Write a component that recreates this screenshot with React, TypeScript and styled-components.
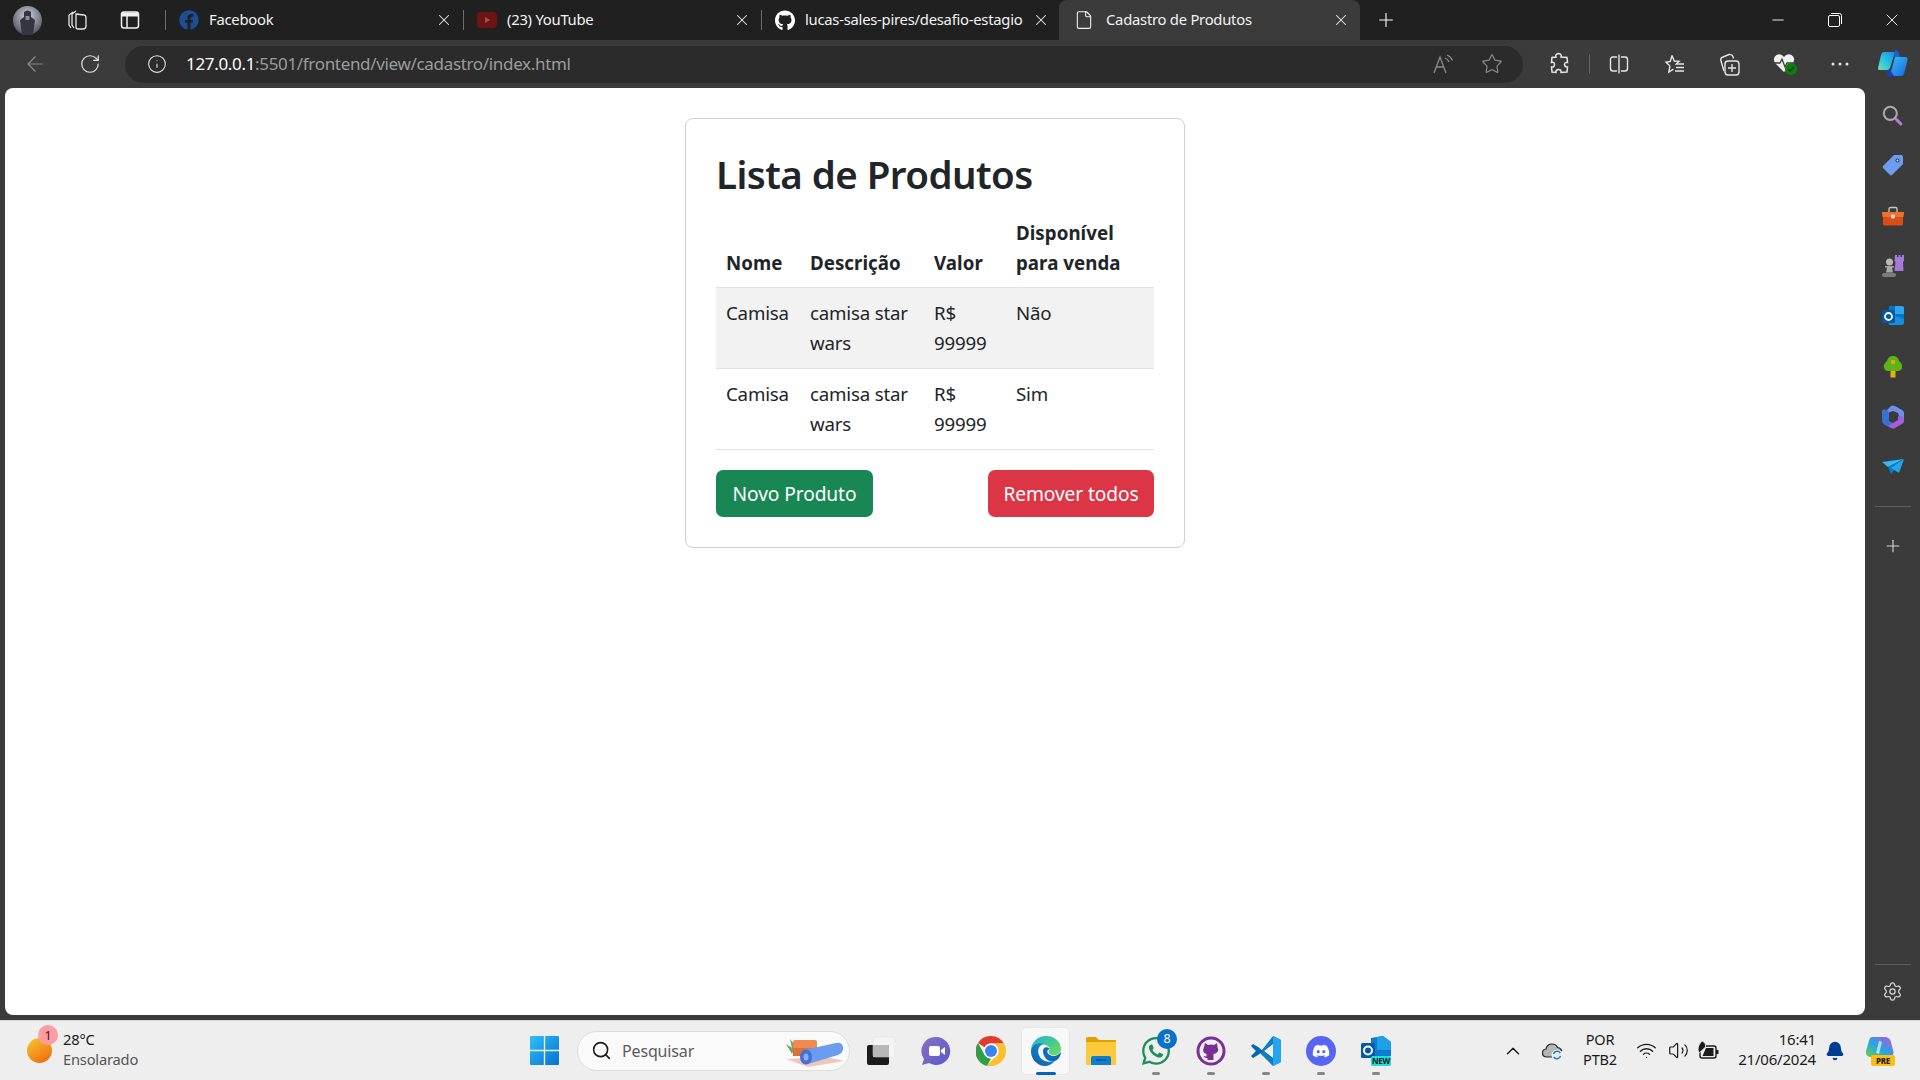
import React from 'react'

import styled, { createGlobalStyle } from 'styled-components'
import {
  ArrowLeft,
  Bell,
  ChevronUp,
  File,
  Info,
  Minus,
  Plus,
  RotateCw,
  Search,
  Settings,
  Star,
  Volume2,
  Wifi,
  X,
} from 'lucide-react'
import { FaDiscord, FaFacebook, FaGithub, FaWhatsapp } from 'react-icons/fa'

/**********************************************************************/

const GlobalStyle = createGlobalStyle`
  html, body {
    margin: 0;
    height: 100%;
    overflow: hidden;
    background: #3b3b3b;
    font-family: "Noto Sans", "Open Sans", sans-serif;
  }

  * {
    box-sizing: border-box;
  }
`

const Screen = styled.div`
  display: flex;
  flex-direction: column;
  width: 1920px;
  height: 1080px;
`

/* title bar ***********************************************************/

const TabStrip = styled.div`
  display: flex;
  align-items: stretch;
  height: 40px;
  background: #202020;
  color: #fff;
`

const StripButton = styled.div<{ $w: number; $gap?: number }>`
  display: flex;
  align-items: center;
  justify-content: center;
  width: ${(p) => p.$w}px;
  margin-right: ${(p) => p.$gap ?? 0}px;
`

const Tab = styled.div<{ $active?: boolean }>`
  display: flex;
  align-items: center;
  gap: ${(p) => (p.$active ? 12 : 10)}px;
  width: ${(p) => (p.$active ? 301 : 298)}px;
  padding: 0 10px 0 14px;
  font-size: 14.8px;
  letter-spacing: -0.25px;
  white-space: nowrap;
  position: relative;
  color: #f2f2f2;
  background: ${(p) => (p.$active ? '#3b3b3b' : 'transparent')};
  border-radius: ${(p) => (p.$active ? '8px 8px 0 0' : '0')};
  padding-left: ${(p) => (p.$active ? 15 : 14)}px;

  &::before {
    content: '';
    display: ${(p) => (p.$active ? 'none' : 'block')};
    position: absolute;
    left: 0;
    top: 10px;
    bottom: 10px;
    width: 1px;
    background: #6b6b6b;
  }
`

const TabTitle = styled.span`
  margin-bottom: 2px;
`

const TabIcon = styled.span`
  display: flex;
  align-items: center;
  justify-content: center;
  width: 20px;
  height: 20px;
  flex: none;
`

const TabClose = styled.span`
  display: flex;
  margin-left: auto;
  margin-right: 0;
  color: #e8e8e8;
`

const WindowButtons = styled.div`
  display: flex;
  margin-left: auto;
`

const WindowButton = styled.div`
  display: flex;
  align-items: center;
  justify-content: center;
  width: 57px;
  color: #fff;
`

/* toolbar *************************************************************/

const Toolbar = styled.div`
  display: flex;
  align-items: center;
  height: 48px;
  padding-left: 7px;
  background: #3b3b3b;
  color: #e6e6e6;
`

const ToolButton = styled.div<{ $w?: number; $dim?: boolean; $lead?: number }>`
  display: flex;
  align-items: center;
  justify-content: center;
  flex: none;
  width: ${(p) => p.$w ?? 55}px;
  height: 48px;
  padding-left: ${(p) => p.$lead ?? 0}px;
  color: ${(p) => (p.$dim ? '#8c8c8c' : '#e6e6e6')};
`

const AddressBar = styled.div`
  display: flex;
  align-items: center;
  width: 1398px;
  height: 37px;
  margin-left: 8px;
  padding: 0 7px 0 22px;
  background: #2b2b2b;
  border-radius: 19px;
`

const Url = styled.div`
  margin: 0 0 2px 19px;
  font-size: 17px;
  letter-spacing: -0.33px;
  color: #9c9c9c;
  white-space: nowrap;

  b {
    font-weight: 400;
    color: #fff;
  }
`

const AddressActions = styled.div`
  display: flex;
  margin-left: auto;
`

const ToolDivider = styled.div`
  width: 1px;
  height: 20px;
  margin: 0 1px 0 2px;
  background: #666;
`

/* page ****************************************************************/

const Body = styled.div`
  display: flex;
  height: 932px;
  background: #3b3b3b;
`

const Page = styled.main`
  width: 1860px;
  height: 927px;
  margin-left: 5px;
  padding-top: 30px;
  background: #fff;
  border-radius: 8px;
`

const Card = styled.section`
  width: 500px;
  height: 430px;
  margin: 0 auto;
  padding: 30px;
  background: #fff;
  border: 1px solid #d0d0d0;
  border-radius: 8px;
  color: #212529;
`

const Title = styled.h1`
  margin: 0 0 9px;
  padding-top: 1px;
  font-size: 38.5px;
  font-weight: 600;
  line-height: 48px;
  letter-spacing: -0.55px;
`

const Table = styled.table`
  width: 438px;
  border-collapse: collapse;
  table-layout: fixed;
  font-size: 18.7px;
  line-height: 30px;
  letter-spacing: -0.2px;
`

const HeadCell = styled.th<{ $w: number }>`
  width: ${(p) => p.$w}px;
  padding: 11px 10px 9px;
  text-align: left;
  vertical-align: bottom;
  font-weight: 700;
  letter-spacing: 0.05px;
  border-bottom: 1px solid #dee2e6;
`

const Row = styled.tr<{ $striped?: boolean }>`
  background: ${(p) => (p.$striped ? '#f2f2f2' : '#fff')};
`

const Cell = styled.td`
  padding: 10px;
  vertical-align: top;
  border-bottom: 1px solid #dee2e6;
`

const Actions = styled.div`
  display: flex;
  justify-content: space-between;
  margin-top: 20px;
`

const Button = styled.button<{ $tone: string; $w: number }>`
  width: ${(p) => p.$w}px;
  height: 47px;
  padding: 0;
  border: none;
  border-radius: 7px;
  background: ${(p) => p.$tone};
  color: #fff;
  font-family: inherit;
  font-size: 19.2px;
  letter-spacing: -0.1px;
`

/* side bar ************************************************************/

const SideBar = styled.aside`
  display: flex;
  flex-direction: column;
  align-items: center;
  width: 55px;
  padding: 2px 0 3px;
  color: #d8d8d8;
`

const SideItem = styled.div`
  display: flex;
  align-items: center;
  justify-content: center;
  width: 100%;
  height: 50.3px;
  flex: none;
`

const SideRule = styled.div<{ $auto?: boolean }>`
  width: 36px;
  height: 1px;
  margin-top: ${(p) => (p.$auto ? 'auto' : '14px')};
  margin-bottom: ${(p) => (p.$auto ? '2px' : '13px')};
  background: #5e5e5e;
`

/* task bar ************************************************************/

const TaskBar = styled.footer`
  display: flex;
  align-items: center;
  height: 60px;
  background: #eeeeee;
  border-top: 1px solid #d6d6d6;
  color: #1b1b1b;
  font-size: 14.7px;
  letter-spacing: -0.2px;
`

const Weather = styled.div`
  display: flex;
  align-items: center;
  gap: 11px;
  width: 516px;
  padding-left: 27px;
  position: relative;
`

const WeatherText = styled.div`
  margin-bottom: 3px;
  font-size: 14.7px;
  line-height: 20px;

  small {
    display: block;
    font-size: 14.7px;
    color: #555;
  }
`

const Badge = styled.span<{ $bg: string; $fg: string; $top: number; $left: number }>`
  position: absolute;
  top: ${(p) => p.$top}px;
  left: ${(p) => p.$left}px;
  display: flex;
  align-items: center;
  justify-content: center;
  width: 20px;
  height: 20px;
  border-radius: 50%;
  background: ${(p) => p.$bg};
  color: ${(p) => p.$fg};
  font-size: 12.5px;
  letter-spacing: 0;
`

const StartButton = styled.div`
  display: flex;
  align-items: center;
  justify-content: center;
  width: 56px;
`

const SearchBox = styled.div`
  display: flex;
  align-items: center;
  width: 273px;
  height: 40px;
  margin-left: 5px;
  padding: 0 5px 0 13px;
  background: #fafafa;
  border: 1px solid #dcdcdc;
  border-radius: 20px;
  color: #5a5a5a;
  font-size: 16px;
  letter-spacing: -0.15px;

  span {
    margin-left: 10px;
  }

  svg:last-child {
    margin-left: auto;
  }
`

const Apps = styled.div`
  display: flex;
  margin-left: 3px;
`

const AppSlot = styled.div<{ $active?: boolean }>`
  display: flex;
  align-items: center;
  justify-content: center;
  width: 55px;
  height: 48px;
  position: relative;

  ${(p) =>
    p.$active &&
    `
    &::before {
      content: '';
      position: absolute;
      inset: 0 3px;
      background: #f8f8f8;
      border: 1px solid #e8e8e8;
      border-radius: 5px;
    }
  `}

  & > svg {
    position: relative;
  }
`

const RunDot = styled.i<{ $active?: boolean }>`
  position: absolute;
  left: 50%;
  bottom: 0;
  width: ${(p) => (p.$active ? 20 : 8)}px;
  height: 3px;
  transform: translateX(-50%);
  border-radius: 2px;
  background: ${(p) => (p.$active ? '#0067c0' : '#858585')};
`

const Tray = styled.div`
  display: flex;
  align-items: center;
  margin-left: auto;
  padding-right: 14px;
`

const TrayItem = styled.div<{ $w: number }>`
  display: flex;
  align-items: center;
  justify-content: center;
  width: ${(p) => p.$w}px;
`

const TwoLines = styled.div<{ $w: number; $right?: boolean }>`
  width: ${(p) => p.$w}px;
  margin-bottom: 3px;
  text-align: ${(p) => (p.$right ? 'right' : 'center')};
  font-size: ${(p) => (p.$right ? 15 : 14.5)}px;
  line-height: 20px;
  letter-spacing: -0.2px;
`

/* drawings ************************************************************/

const Avatar = () => (
  <svg width="29" height="29" viewBox="0 0 29 29">
    <defs>
      <radialGradient id="av" cx="50%" cy="35%" r="70%">
        <stop offset="0" stopColor="#d0d3da" />
        <stop offset="1" stopColor="#474a54" />
      </radialGradient>
    </defs>
    <circle cx="14.500" cy="14.500" r="14.500" fill="url(#av)" />
    <path d="M11 6 q3.500-3 7 0 l0 5 4 3 -2 15 -11 0 -2-15 4-3z" fill="#33363e" />
    <path d="M12.500 10 h4 v4 h-4z" fill="#8a8d95" />
  </svg>
)

const Collections = () => (
  <svg width="22" height="22" viewBox="0 0 22 22" fill="none" stroke="#e6e6e6" strokeWidth="1.3">
    <path d="M3 6 l4-3 M3 6 v10 l2 3 M6 5 l4-3 M6 5 v11 l2 3" />
    <path d="M10 5 l8 1 q2 .4 2 2 v9 q0 3-3 3 h-5 q-2 0-2-2 z" />
  </svg>
)

const TabsIcon = () => (
  <svg width="20" height="20" viewBox="0 0 20 20" fill="none" stroke="#f0f0f0" strokeWidth="1.5">
    <rect x="1.500" y="2" width="17" height="16" rx="2.500" />
    <path d="M7 6 v12" />
    <path d="M2 2.500 h16 v4 h-16z" fill="#f0f0f0" stroke="none" />
  </svg>
)

const YouTubeIcon = () => (
  <svg width="20" height="16" viewBox="0 0 20 16">
    <rect width="20" height="16" rx="4" fill="#6e1414" />
    <path d="M8 5 l5 3 -5 3z" fill="#a85050" />
  </svg>
)

const ReadAloud = () => (
  <svg width="22" height="22" viewBox="0 0 22 22" fill="none" stroke="#8c8c8c" strokeWidth="1.3">
    <path d="M2 20 l6-16 6 16 M4.500 14 h7" />
    <path d="M13 5 q3 1 4 4 M15 2 q4 1.500 5.500 5.500" />
  </svg>
)

const Puzzle = () => (
  <svg width="22" height="24" viewBox="0 0 22 24" fill="none" stroke="#e6e6e6" strokeWidth="1.5">
    <path d="M8 5 q-1-3 2.500-3.500 q3.500 .5 2.500 3.500 l6 .5 .5 5 q-3-.5-3 2 t3 2.500 l-.5 5 -6 .5 q.5-3-2.500-3 t-2.500 3 l-4-.5 -.5-5 q3 .5 3-2.500 t-3-2 l.5-5z" />
  </svg>
)

const SplitIcon = () => (
  <svg width="20" height="22" viewBox="0 0 20 22" fill="none" stroke="#e6e6e6" strokeWidth="1.4">
    <path d="M8 4 h-4 q-2.500 0-2.500 2.500 v9 q0 2.500 2.500 2.500 h4 M12 4 h4 q2.500 0 2.500 2.500 v9 q0 2.500-2.500 2.500 h-4 M10 1.500 v19" />
  </svg>
)

const FavList = () => (
  <svg width="22" height="22" viewBox="0 0 22 22" fill="none" stroke="#e6e6e6" strokeWidth="1.4">
    <path d="M9 2.500 l2.300 5.500 4.700.4 -3.600 3.300 M7 13 l-1.200 6 4.700-2.800 M7 13 l-4-3.800 4.300-.8 1.700-5.900" />
    <path d="M14 11 h7 M13 14.500 h8 M12 18 h9" />
  </svg>
)

const CollAdd = () => (
  <svg width="22" height="24" viewBox="0 0 22 24" fill="none" stroke="#e6e6e6" strokeWidth="1.4">
    <path d="M6 19 l-3-10 q-1-3 2-4 l6-2.500 q3-.5 4 2 l.5 2" />
    <rect x="7" y="9" width="14" height="14" rx="3" />
    <path d="M14 12 v8 M10 16 h8" />
  </svg>
)

const Health = () => (
  <svg width="26" height="24" viewBox="0 0 26 24">
    <path d="M11 20 L2 11 Q-1 6 3.500 3 Q8 1 11 5 Q14 1 18.500 3 Q23 6 20 11z" fill="#f0f0f0" />
    <path d="M1 11 h6 l2-4 3 8 2-4 h6" fill="none" stroke="#3b3b3b" strokeWidth="1.3" />
    <circle cx="18" cy="17" r="6" fill="#107c10" />
    <path d="M15 17 l2 2 4-4" fill="none" stroke="#0f3f0f" strokeWidth="1.3" />
  </svg>
)

const Dots = () => (
  <svg width="18" height="4" viewBox="0 0 18 4" fill="#e6e6e6">
    <circle cx="2" cy="2" r="1.500" />
    <circle cx="9" cy="2" r="1.500" />
    <circle cx="16" cy="2" r="1.500" />
  </svg>
)

const CopilotLogo = () => (
  <svg width="30" height="28" viewBox="0 0 30 28">
    <defs>
      <linearGradient id="cpa" x1="0" y1="1" x2="1" y2="0">
        <stop offset="0" stopColor="#6fe4a0" />
        <stop offset=".5" stopColor="#27c0e8" />
        <stop offset="1" stopColor="#1b8ce0" />
      </linearGradient>
      <linearGradient id="cpb" x1="0" y1="0" x2="1" y2="1">
        <stop offset="0" stopColor="#37bdf8" />
        <stop offset="1" stopColor="#1668e0" />
      </linearGradient>
    </defs>
    <path d="M6 2 h11 l-5 16 q-1 2-3 2 H2 q-2.500 0-2-2 L3 5 q.8-3 3-3z" fill="url(#cpa)" />
    <path d="M17 0 q3 0 4 3 l1 4 h-6z" fill="#1e5fd0" />
    <path d="M17 7 h10 q3 0 2.500 3 L26 24 q-1 2-3 2 H12 l5-19z" fill="url(#cpb)" />
    <path d="M8 20 h4 l4 6 q-5 2-6 0z" fill="#1a3fb0" />
  </svg>
)

const MagnifierColor = () => (
  <svg width="21" height="21" viewBox="0 0 24 24" fill="none">
    <circle cx="9.500" cy="9.500" r="7.500" stroke="#a8a8a8" strokeWidth="2.400" />
    <path d="M15 15 l1.500 1.500" stroke="#a8a8a8" strokeWidth="2.400" />
    <path d="M17 17 l4.500 4.500" stroke="#b57ad8" strokeWidth="3.500" strokeLinecap="round" />
  </svg>
)

const TagIcon = () => (
  <svg width="22" height="22" viewBox="0 0 22 22">
    <path d="M12 1 h7 q2 0 2 2 v7 L10 21 q-1 .8-2 0 L1 14 q-.8-1 0-2z" fill="#6c9df0" />
    <circle cx="15.500" cy="6.500" r="2" fill="#26364f" />
    <circle cx="15.500" cy="6.500" r=".9" fill="#fff" />
  </svg>
)

const ToolBox = () => (
  <svg width="22" height="20" viewBox="0 0 22 20">
    <path d="M7 6 v-3 q0-1.500 1.500-1.500 h5 q1.500 0 1.500 1.500 v3" fill="none" stroke="#c8c8c8" strokeWidth="1.300" />
    <path d="M0 6 h22 l-.5 5 h-21z" fill="#f07030" />
    <path d="M1 11 h20 v7 q0 1.500-1.500 1.500 h-17 q-1.500 0-1.500-1.500z" fill="#d94f14" />
    <rect x="9" y="8.500" width="4" height="4" rx="1" fill="#d8d8d8" />
  </svg>
)

const ChessIcon = () => (
  <svg width="22" height="24" viewBox="0 0 22 24">
    <path d="M13 1 h2 v2 h1.500 v-2 h2 v2 h1.500 v-2 h2 v6 l-1 1 .5 9 h-9 l1-9 -1-1z" fill="#a57ad6" />
    <circle cx="7.500" cy="8" r="3.500" fill="#b8b8b8" />
    <path d="M3 12 h9 v1.500 h-2 l1 5 h-7 l1-5 h-2z" fill="#a8a8a8" />
    <rect x="0" y="19" width="14" height="4" rx="2" fill="#7c7c7c" />
  </svg>
)

const OutlookIcon = () => (
  <svg width="22" height="22" viewBox="0 0 22 22">
    <path d="M7 1 h12 q3 0 3 2 v14 q0 3-3 3 H7z" fill="#0a70c8" />
    <path d="M13 1 h6 q3 0 3 2 v6 h-9z" fill="#28a8ea" />
    <path d="M7 9 l15 5 v3 q0 3-3 3 H7z" fill="#1490df" />
    <rect x="0" y="5" width="13" height="13" rx="1.500" fill="#0358a7" />
    <circle cx="6.500" cy="11.500" r="3.500" fill="none" stroke="#fff" strokeWidth="1.800" />
  </svg>
)

const TreeIcon = () => (
  <svg width="20" height="22" viewBox="0 0 20 22">
    <path d="M10 0 q5 0 6 5 q4 3 3 7 q-1 3-4 3 H5 q-3 0-4-3 q-1-4 3-7 q1-5 6-5z" fill="#5cb517" />
    <rect x="7.500" y="15" width="5" height="6.500" fill="#e8b010" />
    <circle cx="10" cy="6" r="2.200" fill="#f0a020" />
  </svg>
)

const M365Icon = () => (
  <svg width="22" height="24" viewBox="0 0 22 24">
    <path d="M9 1 q2-1 4 0 l7 4 q2 1 2 3 v6 l-5-3 -1-3 -5-2 -5 2 -2-2z" fill="#6f8fe8" />
    <path d="M2 4 l4 2 1 2 v8 l4 2 -2 5 -6-3 q-3-2-3-4 V7 q0-2 2-3z" fill="#3a6fd8" />
    <path d="M22 12 v4 q0 2-2 3 l-7 4 q-2 1-4 0 l-3-2 5-3 5-3 -1-4z" fill="#a060d8" />
    <path d="M8 8 l4-1 4 2 v5 l-5 3 -3-1z" fill="#3b3b3b" />
  </svg>
)

const PlaneIcon = () => (
  <svg width="22" height="16" viewBox="0 0 22 16">
    <path d="M0 3 L22 0 L6 8z" fill="#35b8f5" />
    <path d="M22 0 L6 8 L9 15z" fill="#0b78c8" />
    <path d="M22 0 L9 9 L17 14z" fill="#22a6ea" />
  </svg>
)

const WeatherBall = () => (
  <svg width="25" height="25" viewBox="0 0 25 25">
    <defs>
      <linearGradient id="sun" x1="0.2" y1="0" x2="0.8" y2="1">
        <stop offset="0" stopColor="#f3c22f" />
        <stop offset="1" stopColor="#f06a0c" />
      </linearGradient>
    </defs>
    <circle cx="12.500" cy="12.500" r="12.500" fill="url(#sun)" />
  </svg>
)

const WindowsLogo = () => (
  <svg width="29" height="29" viewBox="0 0 29 29">
    <defs>
      <linearGradient id="win" x1="0" y1="0" x2="1" y2="1">
        <stop offset="0" stopColor="#30c0f8" />
        <stop offset="1" stopColor="#0670d0" />
      </linearGradient>
    </defs>
    <path d="M1 0 h12.800 v13.800 H0 V1 q0-1 1-1z M15.200 0 H28 q1 0 1 1 v12.800 H15.200z M0 15.200 h13.800 V29 H1 q-1 0-1-1z M15.200 15.200 H29 V28 q0 1-1 1 H15.200z" fill="url(#win)" />
  </svg>
)

const SearchArt = () => (
  <svg width="60" height="32" viewBox="0 0 60 32">
    <path d="M2 24 L42 22 L60 26 L24 32z" fill="#f3c4b8" />
    <path d="M6 4 l5 6 -2 8z M2 9 l8 5 -2 5z" fill="#6aa86a" />
    <rect x="9" y="5" width="24" height="15" rx="2" fill="#f08a50" />
    <rect x="9" y="13" width="24" height="8" fill="#d87038" />
    <path d="M20 15 L52 8 q6-1 7 4 t-5 8 L24 29z" fill="#6a9cf0" />
    <ellipse cx="22" cy="22" rx="6" ry="7.500" fill="#3f6fd8" />
    <ellipse cx="22" cy="22" rx="2.500" ry="3.500" fill="#8ab0f5" />
  </svg>
)

const TaskView = () => (
  <svg width="30" height="30" viewBox="0 0 30 30">
    <rect x="1" y="9" width="22" height="20" rx="2" fill="#1c1c1c" />
    <rect x="7" y="1" width="22" height="20" rx="2" fill="#f4f4f4" fillOpacity=".85" stroke="#e2e2e2" strokeWidth=".5" />
    <rect x="7" y="9" width="16" height="12" fill="#b8b8b8" />
  </svg>
)

const MeetIcon = () => (
  <svg width="30" height="30" viewBox="0 0 30 30">
    <defs>
      <linearGradient id="meet" x1="0" y1="0" x2="1" y2="1">
        <stop offset="0" stopColor="#8a70c8" />
        <stop offset="1" stopColor="#5a5ac8" />
      </linearGradient>
    </defs>
    <path d="M15 1 a14 14 0 1 1 -7 26 L1 29 l2-6 A14 14 0 0 1 15 1z" fill="url(#meet)" />
    <rect x="8" y="10" width="11" height="10" rx="2" fill="#fff" />
    <path d="M20 14 l4-3 v8 l-4-3z" fill="#fff" />
  </svg>
)

const ChromeIcon = () => (
  <svg width="30" height="30" viewBox="0 0 30 30">
    <path d="M15 0 a15 15 0 0 1 13 7.500 H15 a7.500 7.500 0 0 0 -6.500 3.800 L2 7 A15 15 0 0 1 15 0z" fill="#e33b2e" />
    <path d="M2 7 L8.500 18.800 a7.500 7.500 0 0 0 6.500 3.700 L11 30 A15 15 0 0 1 2 7z" fill="#2f9e44" />
    <path d="M28 7.500 A15 15 0 0 1 11 29.500 L21.500 18.800 A7.500 7.500 0 0 0 15 7.500z" fill="#fbc02d" />
    <circle cx="15" cy="15" r="7.500" fill="#fff" />
    <circle cx="15" cy="15" r="6" fill="#3b82f0" />
  </svg>
)

const EdgeIcon = () => (
  <svg width="30" height="30" viewBox="0 0 30 30">
    <defs>
      <linearGradient id="edgeA" x1="0" y1="1" x2="1" y2="0">
        <stop offset="0" stopColor="#0c59a4" />
        <stop offset="1" stopColor="#1b9de2" />
      </linearGradient>
      <linearGradient id="edgeB" x1="0" y1="0" x2="1" y2="1">
        <stop offset="0" stopColor="#1bb0d8" />
        <stop offset="1" stopColor="#72e04f" />
      </linearGradient>
    </defs>
    <path d="M15 0 C24 0 30 6 30 13 C30 18 25 20 21 19 C17 18 17 15 19 13 C17 8 10 7 5 11 C2 13 1 15 0 15 C0 6 7 0 15 0z" fill="url(#edgeB)" />
    <path d="M0 15 C1 8 8 6 13 8 C8 9 6 14 8 19 C10 25 17 27 24 25 C20 29 17 30 14 30 C6 30 0 23 0 15z" fill="url(#edgeA)" />
    <path d="M12 15 C12 11 16 10 19 13 C16 13 15 17 19 19 C22 21 27 20 30 16 C30 20 27 24 24 25 C17 27 12 21 12 15z" fill="#0f6cbd" />
  </svg>
)

const FolderIcon = () => (
  <svg width="30" height="28" viewBox="0 0 30 28">
    <path d="M0 2 q0-2 2-2 h8 l3 3 h17 v5 H0z" fill="#e0a000" />
    <path d="M0 5 h30 v23 H0z" fill="#fcc83c" />
    <path d="M5 28 v-7 q0-2 2-2 h16 q2 0 2 2 v7z" fill="#0e7fd0" />
    <path d="M10 23 h10" stroke="#094f86" strokeWidth="1.500" />
  </svg>
)

const GithubDesktop = () => (
  <svg width="30" height="30" viewBox="0 0 30 30">
    <circle cx="15" cy="15" r="13" fill="#f2eef6" stroke="#7a2f94" strokeWidth="3" />
    <path d="M9 7 l3 2 q3-1 6 0 l3-2 .5 4 q1.500 3 0 5 q-2 2-4 2 v6 h-6 v-2 q-3 .5-4-2 l3 .5 v-2.500 q-2-.5-3-2 q-1-2 .5-5z" fill="#7a2f94" />
  </svg>
)

const VsCode = () => (
  <svg width="30" height="30" viewBox="0 0 30 30">
    <path d="M22 0 L30 4 V26 L22 30 L8 16 L11 14z" fill="#0e7fc4" />
    <path d="M22 0 L30 4 V26 L22 30z" fill="#23a6ee" />
    <path d="M22 7 L7 19 L2 22 L0 20 L5 15 L0 10 L2 8 L7 11 L22 23 V7z" fill="#0067b8" />
    <path d="M22 8 V22 L13 15z" fill="#eee" />
  </svg>
)

const DiscordBall = () => (
  <svg width="30" height="30" viewBox="0 0 30 30">
    <circle cx="15" cy="15" r="15" fill="#5865f2" />
    <foreignObject x="6" y="6" width="18" height="18">
      <FaDiscord size={18} color="#fff" />
    </foreignObject>
  </svg>
)

const OutlookNew = () => (
  <svg width="30" height="30" viewBox="0 0 30 30">
    <path d="M10 2 L22 0 L30 6 V20 H10z" fill="#0f7bd0" />
    <path d="M16 1 L22 0 L30 6 V14 H16z" fill="#1ca0e8" />
    <rect x="0" y="7" width="14" height="15" rx="1.500" fill="#0358a7" />
    <circle cx="7" cy="14.500" r="4" fill="none" stroke="#fff" strokeWidth="2" />
    <rect x="10" y="20" width="20" height="10" rx="1.500" fill="#1be0d8" />
    <text x="20" y="28" textAnchor="middle" fontSize="8" fontWeight="700" fill="#111" fontFamily="Noto Sans">NEW</text>
  </svg>
)

const SyncCloud = () => (
  <svg width="22" height="20" viewBox="0 0 22 20">
    <path d="M5 16 q-4.500 0-4.500-4 q0-3.500 3.500-4 q1-5 6-5 q4 0 5.500 3.500 q3 .3 4 3 l-5 6.500z" fill="#b5b5b5" stroke="#222" strokeWidth="1.200" />
    <circle cx="15" cy="14" r="5.500" fill="#eeeeee" />
    <path d="M11.500 13 a3.800 3.800 0 0 1 6.800-1 M18.500 15 a3.800 3.800 0 0 1 -6.800 1" fill="none" stroke="#1a7fd4" strokeWidth="1.500" />
  </svg>
)

const BatteryLeaf = () => (
  <svg width="22" height="20" viewBox="0 0 22 20">
    <rect x="3" y="5" width="16" height="12" rx="2" fill="none" stroke="#1b1b1b" strokeWidth="1.400" />
    <rect x="19" y="9" width="2.500" height="4" fill="#1b1b1b" />
    <path d="M9 7 h7.500 v8 h-11z" fill="#1b1b1b" />
    <path d="M5 0 q4 1.500 3.500 6 q-3 3-6.500 6 q-3-6 3-12z" fill="#1b1b1b" stroke="#eee" strokeWidth=".8" />
  </svg>
)

const CopilotPre = () => (
  <svg width="30" height="30" viewBox="0 0 30 30">
    <defs>
      <linearGradient id="pre" x1="0" y1="1" x2="1" y2="0">
        <stop offset="0" stopColor="#6fd048" />
        <stop offset=".45" stopColor="#1fa8e8" />
        <stop offset="1" stopColor="#c050d8" />
      </linearGradient>
    </defs>
    <path d="M7 1 h14 q4 1 5 5 l2 8 q2 6-4 7 H5 q-5-1-4-6 L4 5 q1-4 3-4z" fill="url(#pre)" />
    <path d="M14 5 l3 1 -3 12 -3-1z" fill="#fff" fillOpacity=".65" />
    <rect x="6" y="19" width="24" height="11" rx="2" fill="#fdbd12" />
    <text x="18" y="27.500" textAnchor="middle" fontSize="8" fontWeight="800" fill="#222" fontFamily="Noto Sans">PRE</text>
  </svg>
)

/**********************************************************************/

const rows = [
  { available: 'Não', striped: true },
  { available: 'Sim', striped: false },
]

const App: React.FC = () => {
  return (
    <Screen>
      <GlobalStyle />

      <TabStrip>
        <StripButton $w={55}>
          <Avatar />
        </StripButton>
        <StripButton $w={43}>
          <Collections />
        </StripButton>
        <StripButton $w={63} $gap={4}>
          <TabsIcon />
        </StripButton>
        <Tab>
          <TabIcon>
            <FaFacebook size={20} color="#1c4f96" />
          </TabIcon>
          <TabTitle>Facebook</TabTitle>
          <TabClose>
            <X size={18} strokeWidth={1.4} />
          </TabClose>
        </Tab>
        <Tab>
          <TabIcon>
            <YouTubeIcon />
          </TabIcon>
          <TabTitle>(23) YouTube</TabTitle>
          <TabClose>
            <X size={18} strokeWidth={1.4} />
          </TabClose>
        </Tab>
        <Tab>
          <TabIcon>
            <FaGithub size={21} color="#fff" />
          </TabIcon>
          <TabTitle>lucas-sales-pires/desafio-estagio</TabTitle>
          <TabClose>
            <X size={18} strokeWidth={1.4} />
          </TabClose>
        </Tab>
        <Tab $active>
          <TabIcon>
            <File size={20} strokeWidth={1.3} />
          </TabIcon>
          <TabTitle>Cadastro de Produtos</TabTitle>
          <TabClose>
            <X size={18} strokeWidth={1.4} />
          </TabClose>
        </Tab>
        <StripButton $w={52}>
          <Plus size={22} strokeWidth={1.2} />
        </StripButton>
        <WindowButtons>
          <WindowButton>
            <Minus size={18} strokeWidth={1.2} />
          </WindowButton>
          <WindowButton>
            <svg width="14" height="14" viewBox="0 0 14 14" fill="none" stroke="#fff">
              <rect x=".5" y="2.500" width="11" height="11" rx="1.500" />
              <path d="M3 .5 h8.500 q2 0 2 2 V11" />
            </svg>
          </WindowButton>
          <WindowButton>
            <X size={20} strokeWidth={1.1} />
          </WindowButton>
        </WindowButtons>
      </TabStrip>

      <Toolbar>
        <ToolButton $dim>
          <ArrowLeft size={24} strokeWidth={1.2} />
        </ToolButton>
        <ToolButton>
          <RotateCw size={22} strokeWidth={1.3} />
        </ToolButton>
        <AddressBar>
          <Info size={20} strokeWidth={1.3} color="#e6e6e6" />
          <Url>
            <b>127.0.0.1</b>:5501/frontend/view/cadastro/index.html
          </Url>
          <AddressActions>
            <ToolButton $w={50}>
              <ReadAloud />
            </ToolButton>
            <ToolButton $w={48} $dim>
              <Star size={22} strokeWidth={1.3} />
            </ToolButton>
          </AddressActions>
        </AddressBar>
        <ToolButton $w={64} $lead={8}>
          <Puzzle />
        </ToolButton>
        <ToolDivider />
        <ToolButton>
          <SplitIcon />
        </ToolButton>
        <ToolButton>
          <FavList />
        </ToolButton>
        <ToolButton>
          <CollAdd />
        </ToolButton>
        <ToolButton $lead={4}>
          <Health />
        </ToolButton>
        <ToolButton $w={57}>
          <Dots />
        </ToolButton>
        <ToolButton $w={50}>
          <CopilotLogo />
        </ToolButton>
      </Toolbar>

      <Body>
        <Page>
          <Card>
            <Title>Lista de Produtos</Title>
            <Table>
              <thead>
                <tr>
                  <HeadCell $w={84}>Nome</HeadCell>
                  <HeadCell $w={124}>Descrição</HeadCell>
                  <HeadCell $w={82}>Valor</HeadCell>
                  <HeadCell $w={148}>Disponível para venda</HeadCell>
                </tr>
              </thead>
              <tbody>
                {rows.map((row) => (
                  <Row key={row.available} $striped={row.striped}>
                    <Cell>Camisa</Cell>
                    <Cell>camisa star wars</Cell>
                    <Cell>R$ 99999</Cell>
                    <Cell>{row.available}</Cell>
                  </Row>
                ))}
              </tbody>
            </Table>
            <Actions>
              <Button $tone="#198754" $w={157}>
                Novo Produto
              </Button>
              <Button $tone="#dc3545" $w={166}>
                Remover todos
              </Button>
            </Actions>
          </Card>
        </Page>

        <SideBar>
          <SideItem>
            <MagnifierColor />
          </SideItem>
          <SideItem>
            <TagIcon />
          </SideItem>
          <SideItem>
            <ToolBox />
          </SideItem>
          <SideItem>
            <ChessIcon />
          </SideItem>
          <SideItem>
            <OutlookIcon />
          </SideItem>
          <SideItem>
            <TreeIcon />
          </SideItem>
          <SideItem>
            <M365Icon />
          </SideItem>
          <SideItem>
            <PlaneIcon />
          </SideItem>
          <SideRule />
          <SideItem>
            <Plus size={20} strokeWidth={1.3} />
          </SideItem>
          <SideRule $auto />
          <SideItem>
            <Settings size={21} strokeWidth={1.4} />
          </SideItem>
        </SideBar>
      </Body>

      <TaskBar>
        <Weather>
          <WeatherBall />
          <WeatherText>
            28°C
            <small>Ensolarado</small>
          </WeatherText>
          <Badge $bg="#ff9ba3" $fg="#3a1a1a" $top={-4} $left={38}>
            1
          </Badge>
        </Weather>
        <StartButton>
          <WindowsLogo />
        </StartButton>
        <SearchBox>
          <Search size={21} strokeWidth={1.8} color="#1b1b1b" />
          <span>Pesquisar</span>
          <SearchArt />
        </SearchBox>
        <Apps>
          <AppSlot>
            <TaskView />
          </AppSlot>
          <AppSlot>
            <MeetIcon />
          </AppSlot>
          <AppSlot>
            <ChromeIcon />
          </AppSlot>
          <AppSlot $active>
            <EdgeIcon />
            <RunDot $active />
          </AppSlot>
          <AppSlot>
            <FolderIcon />
          </AppSlot>
          <AppSlot>
            <FaWhatsapp size={32} color="#1c8f5c" />
            <Badge $bg="#0a70c8" $fg="#fff" $top={2} $left={29}>
              8
            </Badge>
            <RunDot />
          </AppSlot>
          <AppSlot>
            <GithubDesktop />
            <RunDot />
          </AppSlot>
          <AppSlot>
            <VsCode />
            <RunDot />
          </AppSlot>
          <AppSlot>
            <DiscordBall />
            <RunDot />
          </AppSlot>
          <AppSlot>
            <OutlookNew />
            <RunDot />
          </AppSlot>
        </Apps>
        <Tray>
          <TrayItem $w={46}>
            <ChevronUp size={22} strokeWidth={1.6} />
          </TrayItem>
          <TrayItem $w={34}>
            <SyncCloud />
          </TrayItem>
          <TwoLines $w={60}>
            POR
            <br />
            PTB2
          </TwoLines>
          <TrayItem $w={33}>
            <Wifi size={21} strokeWidth={1.5} />
          </TrayItem>
          <TrayItem $w={30}>
            <Volume2 size={21} strokeWidth={1.4} />
          </TrayItem>
          <TrayItem $w={30}>
            <BatteryLeaf />
          </TrayItem>
          <TwoLines $w={93} $right>
            16:41
            <br />
            21/06/2024
          </TwoLines>
          <TrayItem $w={38}>
            <Bell size={20} fill="#003e92" color="#003e92" />
          </TrayItem>
          <TrayItem $w={52}>
            <CopilotPre />
          </TrayItem>
        </Tray>
      </TaskBar>
    </Screen>
  )
}

export default App
